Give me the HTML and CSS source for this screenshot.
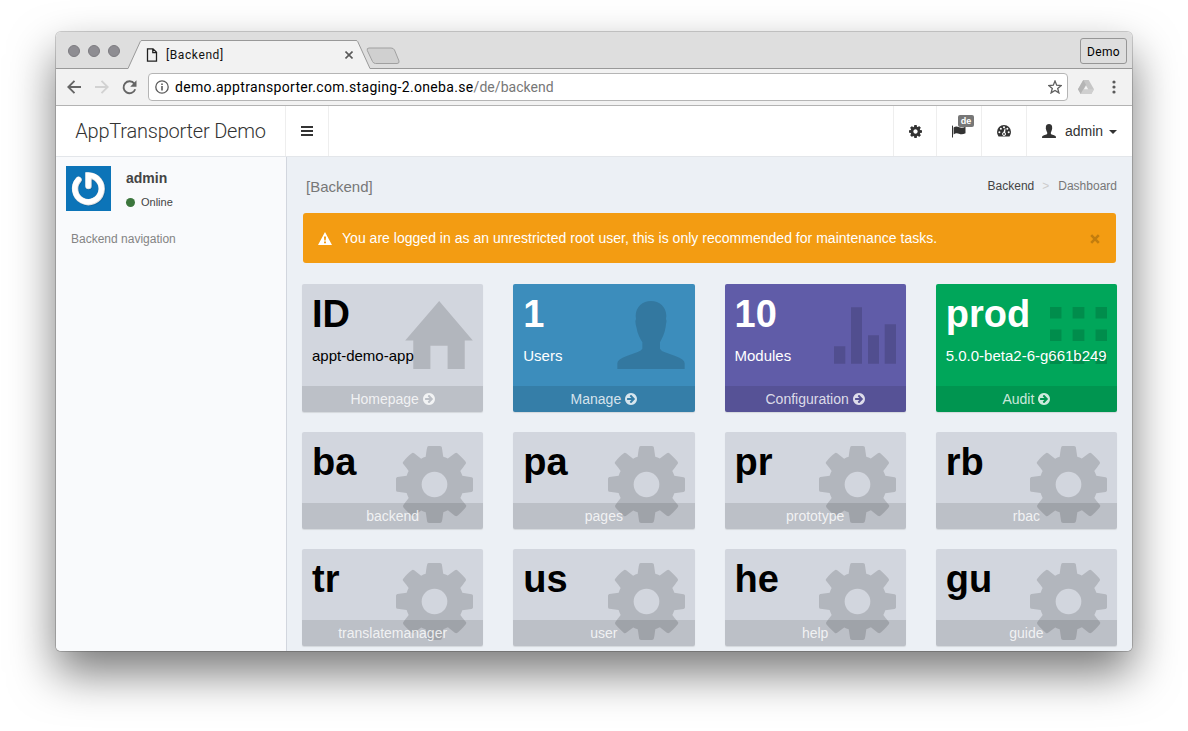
FILE: index.html
```
<!DOCTYPE html>
<html lang="en">
<head>
<meta charset="utf-8">
<title>[Backend]</title>
<link rel="stylesheet" href="styles.css">
</head>
<body>
<svg class="defs" width="0" height="0">
  <symbol id="cog" viewBox="0 -128 1536 1536"><path d="M1024 640q0-106-75-181t-181-75-181 75-75 181 75 181 181 75 181-75 75-181zm512-109v222q0 12-8 23t-20 13l-185 28q-19 54-39 91 35 50 107 138 10 12 10 25t-9 23q-27 37-99 108t-94 71q-12 0-26-9l-138-108q-44 23-91 38-16 136-29 186-7 28-36 28h-222q-14 0-24.500-8.500t-11.500-21.500l-28-184q-49-16-90-37l-141 107q-10 9-25 9-14 0-25-11-126-114-165-168-7-10-7-23 0-12 8-23 15-21 51-66.500t54-70.500q-27-50-41-99l-183-27q-13-2-21-12.500t-8-23.500v-222q0-12 8-23t19-13l186-28q14-46 39-92-40-57-107-138-10-12-10-24 0-10 9-23 26-36 98.500-107.500t94.500-71.500q13 0 26 10l138 107q44-23 91-38 16-136 29-186 7-28 36-28h222q14 0 24.500 8.500t11.500 21.500l28 184q49 16 90 37l142-107q9-9 24-9 13 0 25 10 129 119 165 170 7 8 7 22 0 12-8 23-15 21-51 66.500t-54 70.500q26 50 41 98l183 28q13 2 21 12.500t8 23.500z"/></symbol>
  <symbol id="go" viewBox="128 128 1536 1536"><path d="M1413 896q0-27-18-45l-91-91-362-362q-18-18-45-18t-45 18l-91 91q-18 18-18 45t18 45l189 189h-502q-26 0-45 19t-19 45v128q0 26 19 45t45 19h502l-189 189q-19 19-19 45t19 45l91 91q18 18 45 18t45-18l362-362 91-91q18-18 18-45zm251 0q0 209-103 385.500t-279.500 279.500-385.500 103-385.500-103-279.500-279.500-103-385.500 103-385.500 279.500-279.500 385.500-103 385.500 103 279.500 279.500 103 385.500z"/></symbol>
  <symbol id="person" viewBox="0 0 202 204"><path d="M101 0C126 0 147 17 147 45L146 54Q150 60 146 70L145 78C142 98 134 112 128 124V143Q132 150 141 153L174 165Q202 175 202 187V204H0V187Q0 175 28 165L61 153Q72 149 75 143V124C68 112 60 98 57 78L55 70Q52 60 56 54L55 45C55 17 76 0 101 0Z"/></symbol>
</svg>

<div class="window">
  <header class="tabstrip">
    <div class="lights"><i></i><i></i><i></i></div>
    <div class="tab">
      <svg class="tab-shape" width="243" height="29" viewBox="0 0 243 29"><path d="M0 28.500L12.300 1.500Q12.800 .5 14 .5H228Q229.200 .5 229.700 1.500L242 28.500V29H0Z" fill="#f2f2f2"/><path d="M0 28.500L12.300 1.500Q12.800 .5 14 .5H228Q229.200 .5 229.700 1.500L242 28.500" fill="none" stroke="#999"/></svg>
      <svg class="file" width="12" height="14" viewBox="0 0 12 14" fill="none" stroke="#222" stroke-width="1.300"><path d="M1.500 .8H7L10.500 4.300V13.200H1.500ZM6.800 .8V4.600H10.500"/></svg>
      <span class="tab-title">[Backend]</span>
      <svg class="tab-close" width="8" height="8" viewBox="0 0 8 8" stroke="#5a5a5a" stroke-width="1.600"><path d="M.5 .5L7.500 7.500M7.500 .5L.5 7.500"/></svg>
    </div>
    <svg class="newtab" width="35" height="18" viewBox="0 0 35 18"><path d="M3 1H25Q27.500 1 28.500 3L33 14Q33.500 16.500 31 16.500H9.500Q7.500 16.500 6.500 14.500L1.300 3.500Q.5 1 3 1Z" fill="#d0d0d0" stroke="#a0a0a0"/></svg>
    <div class="profile">Demo</div>
  </header>

  <div class="toolbar">
    <svg class="back" width="14" height="14" viewBox="0 0 14 14" fill="none" stroke="#656565" stroke-width="1.900"><path d="M14 7H1.500M7.500 .8L1.300 7L7.500 13.200"/></svg>
    <svg class="forward" width="14" height="14" viewBox="0 0 14 14" fill="none" stroke="#d2d2d2" stroke-width="1.900"><path d="M0 7H12.500M6.500 .8L12.700 7L6.500 13.200"/></svg>
    <svg class="reload" width="15" height="15" viewBox="0 0 15 15"><path d="M12.300 3.600A6 6 0 1 0 13.200 9.300" fill="none" stroke="#656565" stroke-width="1.900"/><path d="M14.500 .3V6.700H8.200Z" fill="#656565"/></svg>
    <div class="omnibox">
      <svg width="14" height="14" viewBox="0 0 14 14"><circle cx="7" cy="7" r="6.200" fill="none" stroke="#5a5a5a" stroke-width="1.300"/><path d="M6.200 6H7.800V10.500H6.200ZM6.200 3.400H7.800V5H6.200Z" fill="#5a5a5a"/></svg>
      <span class="url"><b>demo.apptransporter.com.staging-2.oneba.se</b>/de/backend</span>
      <svg class="star" width="14" height="14" viewBox="0 0 14 14"><path d="M7 1L8.700 5.200L13.200 5.500L9.700 8.400L10.900 12.900L7 10.400L3.100 12.900L4.300 8.400L.8 5.500L5.300 5.200Z" fill="none" stroke="#606060" stroke-width="1.300"/></svg>
    </div>
    <svg class="drive" width="16" height="14" viewBox="0 0 16 14"><path d="M5.300 0H10.700L16 9.300L13.300 14H2.700L0 9.300Z" fill="#c6c6c6"/><path d="M5.300 0L8 4.700L2.700 14L0 9.300Z" fill="#b5b5b5"/><path d="M5.400 9.300H16L13.300 14H2.700Z" fill="#cfcfcf"/><path d="M8 5.600L10.200 9.300H5.800Z" fill="#f2f2f2"/></svg>
    <svg class="dots" width="4" height="14" viewBox="0 0 4 14" fill="#5a5a5a"><circle cx="2" cy="2" r="1.600"/><circle cx="2" cy="7" r="1.600"/><circle cx="2" cy="12" r="1.600"/></svg>
  </div>

  <nav class="navbar">
    <div class="brand"><span>AppTransporter Demo</span></div>
    <div class="toggle"><i></i><i></i><i></i></div>
    <div class="nav-item nav-cog"><svg width="13" height="13"><use href="#cog"/></svg></div>
    <div class="nav-item nav-flag">
      <svg width="14" height="13" viewBox="0 0 14 13"><path d="M0 .8Q.5 .2 1 .8V12.500H0Z"/><path d="M1.600 2.500Q4 .8 6.500 2Q10 3.400 13.500 1.800V8.200Q10 10.200 7 8.700Q4 7.500 1.600 9.500Z"/></svg>
      <span class="badge">de</span>
    </div>
    <div class="nav-item nav-dash"><svg width="14" height="12" viewBox="0 0 14 12"><path d="M7 0A7 7 0 0 1 14 7Q14 9.500 12.500 11.500H1.500Q0 9.500 0 7A7 7 0 0 1 7 0Z"/><g fill="#fff"><circle cx="2.400" cy="7.200" r="1"/><circle cx="3.900" cy="3.700" r="1"/><circle cx="7" cy="2.200" r="1"/><circle cx="10.300" cy="3.700" r="1"/><circle cx="11.700" cy="7.200" r="1"/><path d="M8.500 3.600L8.200 7.400A1.900 1.900 0 1 1 6.400 7.200L7.700 3.400Z"/></g><circle cx="7" cy="9" r=".9"/></svg></div>
    <div class="nav-item nav-user"><svg width="14" height="14"><use href="#person"/></svg><span>admin</span><i class="caret"></i></div>
  </nav>

  <div class="body">
    <aside class="sidebar">
      <div class="user-panel">
        <svg width="45" height="45" viewBox="0 0 45 45"><rect width="45" height="45" fill="#0c74b8"/><g fill="none" stroke-linecap="round"><path d="M12.600 13.800A13.300 13.300 0 1 0 22.500 9.500V20" stroke="#075a93" stroke-width="6.400" transform="translate(.7 .8)" opacity=".6"/><path d="M12.600 13.800A13.300 13.300 0 1 0 22.500 9.500V20" stroke="#dedede" stroke-width="6.400"/><path d="M12.300 13.500A13.300 13.300 0 1 0 22.200 9.200V19.700" stroke="#fff" stroke-width="5.200"/></g></svg>
        <div class="user-info"><strong>admin</strong><span class="status"><i></i>Online</span></div>
      </div>
      <div class="nav-title">Backend navigation</div>
    </aside>
    <main class="content">
      <div class="page-head">
        <h1>[Backend]</h1>
        <div class="crumbs"><span class="current">Backend</span><span class="sep">&gt;</span><span>Dashboard</span></div>
      </div>
      <div class="alert">
        <svg width="14" height="13" viewBox="0 0 14 13"><path fill="#fff" fill-rule="evenodd" d="M7 0L14 13H0ZM5.900 4.500L6.300 8.600H7.700L8.100 4.500ZM6 9.500V11.300H8V9.500Z"/></svg>
        <span>You are logged in as an unrestricted root user, this is only recommended for maintenance tasks.</span>
        <svg class="dismiss" width="10" height="10" viewBox="0 0 10 10"><path d="M1.200 1.200L8.800 8.800M8.800 1.200L1.200 8.800" stroke="#c27d0e" stroke-width="2.600"/></svg>
      </div>
      <section class="grid">
        <article class="card tall grey">
          <svg class="icon" width="68" height="68" viewBox="0 0 201 202"><path d="M101 0L201 117H177V202H126V133H75V202H24V117H0Z"/></svg>
          <h3>ID</h3><p>appt-demo-app</p><footer>Homepage <svg width="12" height="12"><use href="#go"/></svg></footer>
        </article>
        <article class="card tall blue">
          <svg class="icon" width="68" height="68"><use href="#person"/></svg>
          <h3>1</h3><p>Users</p><footer>Manage <svg width="12" height="12"><use href="#go"/></svg></footer>
        </article>
        <article class="card tall purple">
          <svg class="icon bars" width="62" height="57" viewBox="0 0 186 170"><path d="M0 117H34V170H0ZM51 0H84V170H51ZM102 84H135V170H102ZM152 51H186V170H152Z"/></svg>
          <h3>10</h3><p>Modules</p><footer>Configuration <svg width="12" height="12"><use href="#go"/></svg></footer>
        </article>
        <article class="card tall green">
          <svg class="icon tiles" width="57" height="57" viewBox="0 0 169 169"><path d="M0 0H34V34H0ZM67 0H102V34H67ZM135 0H169V34H135ZM0 67H34V101H0ZM67 67H102V101H67ZM135 67H169V101H135ZM0 135H34V169H0ZM67 135H102V169H67ZM135 135H169V169H135Z"/></svg>
          <h3>prod</h3><p>5.0.0-beta2-6-g661b249</p><footer>Audit <svg width="12" height="12"><use href="#go"/></svg></footer>
        </article>
        <article class="card grey"><svg class="icon gear" width="77" height="77"><use href="#cog"/></svg><h3>ba</h3><footer>backend</footer></article>
        <article class="card grey"><svg class="icon gear" width="77" height="77"><use href="#cog"/></svg><h3>pa</h3><footer>pages</footer></article>
        <article class="card grey"><svg class="icon gear" width="77" height="77"><use href="#cog"/></svg><h3>pr</h3><footer>prototype</footer></article>
        <article class="card grey"><svg class="icon gear" width="77" height="77"><use href="#cog"/></svg><h3>rb</h3><footer>rbac</footer></article>
        <article class="card grey"><svg class="icon gear" width="77" height="77"><use href="#cog"/></svg><h3>tr</h3><footer>translatemanager</footer></article>
        <article class="card grey"><svg class="icon gear" width="77" height="77"><use href="#cog"/></svg><h3>us</h3><footer>user</footer></article>
        <article class="card grey"><svg class="icon gear" width="77" height="77"><use href="#cog"/></svg><h3>he</h3><footer>help</footer></article>
        <article class="card grey"><svg class="icon gear" width="77" height="77"><use href="#cog"/></svg><h3>gu</h3><footer>guide</footer></article>
      </section>
    </main>
  </div>
</div>
</body>
</html>
```
FILE: styles.css
```
* { box-sizing: border-box; }
html, body { margin: 0; height: 731px; overflow: hidden; background: #fff; }
body { font: 14px/20px "Liberation Sans", Arial, sans-serif; color: #333; padding: 32px 56px 80px; }
svg { display: block; flex: none; }
.defs { position: absolute; }
.window {
  height: 619px; display: flex; flex-direction: column; overflow: hidden;
  border-radius: 5px; background: #fff;
  box-shadow: 0 0 0 1px rgba(0,0,0,.18), 0 22px 46px rgba(0,0,0,.53);
}

.tabstrip { flex: none; height: 37px; background: #dedede; border-bottom: 1px solid #999; display: flex; font-family: Roboto, sans-serif; }
.lights { display: flex; gap: 8px; padding: 13px 0 0 12px; width: 72px; flex: none; }
.lights i { width: 12px; height: 12px; border-radius: 50%; background: #8e8d92; border: 1px solid #7c7b80; }
.tab { position: relative; width: 243px; height: 29px; margin-top: 8px; display: flex; align-items: center; padding: 0 18px 0 18px; flex: none; }
.tab-shape { position: absolute; left: 0; top: 0; }
.tab > :not(.tab-shape) { position: relative; }
.tab-title { margin-left: 8px; flex: 1; font-size: 12px; letter-spacing: .6px; color: #111; }
.newtab { margin: 15px 0 0 -5px; }
.profile { margin: 6px 5px 0 auto; width: 47px; height: 26px; border: 1px solid #969696; border-radius: 3px; text-align: center; line-height: 26px; font-size: 12px; letter-spacing: .3px; color: #000; }

.toolbar { flex: none; height: 37px; background: #f2f2f2; border-bottom: 1px solid #b3b3b3; display: flex; align-items: center; padding-left: 11px; }
.forward { margin-left: 14px; }
.reload { margin-left: 13px; }
.omnibox { margin-left: 11px; width: 920px; height: 28px; border: 1px solid #b5b5b5; border-radius: 4px; background: #fff; display: flex; align-items: center; padding: 0 5px 0 6px; }
.url { margin-left: 6px; flex: 1; font: 14px/26px Roboto, sans-serif; letter-spacing: .05px; color: #777; white-space: nowrap; }
.url b { font-weight: 400; letter-spacing: .33px; color: #000; }
.drive { margin-left: 10px; }
.dots { margin-left: 18px; }

.navbar { flex: none; height: 51px; border-bottom: 1px solid #e3e6ea; display: flex; align-items: stretch; background: #fff; }
.brand { width: 230px; border-right: 1px solid #eee; text-align: center; font: 300 20px/50px Roboto, sans-serif; letter-spacing: -.2px; color: #333; white-space: nowrap; }
.toggle { width: 43px; border-right: 1px solid #eee; margin-right: auto; display: flex; flex-direction: column; justify-content: center; align-items: center; gap: 2px; }
.toggle i { width: 12px; height: 2px; background: #333; }
.nav-item { border-left: 1px solid #eee; display: flex; align-items: center; justify-content: center; fill: #333; color: #333; }
.nav-cog { width: 43px; }
.nav-flag { width: 45px; position: relative; }
.badge { position: absolute; left: 21px; top: 9px; width: 16px; height: 12px; border-radius: 2px; background: #777; color: #fff; font: bold 9px/12px "Liberation Sans", Arial, sans-serif; text-align: center; }
.nav-dash { width: 45px; }
.nav-user { width: 106px; justify-content: flex-start; padding: 0 0 1px 15px; }
.nav-user span { margin: 1px 6px 0 9px; }
.caret { border: 4px solid transparent; border-top-color: #333; border-bottom: 0; margin-top: 3px; }

.body { flex: 1; min-height: 0; display: flex; }
.sidebar { width: 231px; flex: none; background: #f9fafc; border-right: 1px solid #d2d6de; padding: 9px 10px 0; }
.user-panel { display: flex; gap: 15px; }
.user-info { display: flex; flex-direction: column; color: #444; padding-top: 2px; }
.user-info strong { line-height: 20px; }
.status { display: flex; align-items: center; font-size: 11px; line-height: 16px; margin-top: 6px; }
.status i { width: 9px; height: 9px; border-radius: 50%; background: #3c763d; margin-right: 6px; }
.nav-title { margin: 20px 0 0 5px; font-size: 12px; line-height: 16px; color: #848484; }
.content { flex: 1; min-width: 0; background: #ecf0f5; padding: 14px 15px 0; }
.page-head { display: flex; justify-content: space-between; align-items: center; height: 32px; padding-left: 4px; }
.page-head h1 { margin: 0; font-size: 15px; font-weight: 400; color: #777; }
.crumbs { font-size: 12px; color: #777; margin-top: -2px; }
.crumbs .current { color: #444; }
.crumbs .sep { color: #ccc; margin: 0 9px 0 8px; }
.alert { height: 50px; margin: 10px 1px 21px; border-radius: 3px; background: #f39c12; display: flex; align-items: center; padding: 0 16px 0 15px; color: #fff; white-space: nowrap; }
.alert span { margin-left: 10px; flex: 1; letter-spacing: .02px; }
.dismiss { margin-top: 1px; }
.grid { display: grid; grid-template-columns: repeat(4, 1fr); column-gap: 30px; row-gap: 20px; grid-template-rows: 128px 97px 97px; }
.card { position: relative; display: flex; flex-direction: column; border-radius: 2px; overflow: hidden; box-shadow: 0 1px 1px rgba(0,0,0,.1); padding-top: 10px; }
.card h3 { position: relative; margin: 0 10px 9px; font-size: 38px; line-height: 41.800px; font-weight: 700; }
.card p { position: relative; margin: 0 10px; font-size: 15px; line-height: 21px; white-space: nowrap; }
.card footer { position: relative; margin-top: auto; height: 26px; display: flex; align-items: center; justify-content: center; gap: 4px; background: rgba(0,0,0,.1); color: rgba(255,255,255,.8); fill: currentColor; }
.icon { position: absolute; right: 10px; top: 17px; fill: rgba(0,0,0,.15); }
.bars { top: 23px; }
.tiles { top: 23px; }
.gear { top: 14px; }
.grey { background: #d2d6de; color: #000; }
.blue { background: #3c8dbc; color: #fff; }
.purple { background: #605ca8; color: #fff; }
.green { background: #00a65a; color: #fff; }
```
